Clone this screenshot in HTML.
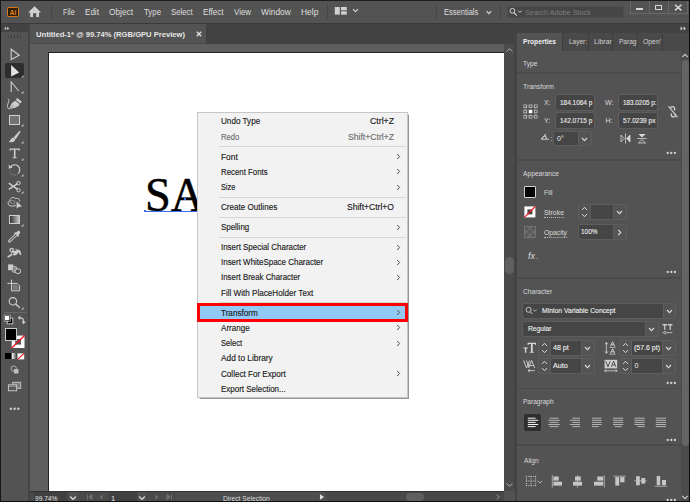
<!DOCTYPE html><html><head><meta charset="utf-8"><title>Illustrator</title><style>
html,body{margin:0;padding:0;background:#535353;}
#root{position:relative;width:690px;height:502px;overflow:hidden;background:#535353;font-family:"Liberation Sans",sans-serif;}
#root div,#root span.t,#root svg{position:absolute;}
span.t{white-space:pre;}
</style></head><body><div id="root"><div style="left:0px;top:0px;width:690px;height:502px;background:#535353;"></div><div style="left:0px;top:0px;width:1px;height:502px;background:#161616;"></div><div style="left:1px;top:23px;width:689px;height:1px;background:#3a3a3a;"></div><div style="left:1px;top:24px;width:689px;height:20px;background:#424242;"></div><div style="left:7.3px;top:6.9px;width:11.5px;height:10.6px;background:#33200c;border:1px solid #d9781c;box-sizing:border-box;border-radius:1.5px"></div><span class="t" id="t1" style="left:9.7px;top:8.00px;font-size:6.5px;line-height:9px;color:#e0841f;font-weight:bold;">Ai</span><svg style="left:0;top:0" width="60" height="24" viewBox="0 0 60 24"><path d="M34.6 6.3 L28.1 12.4 H30.2 V17 H33 V13.3 H36.3 V17 H39 V12.4 H41.1 Z" fill="#d0d0d0"/></svg><div style="left:51px;top:4px;width:1px;height:15px;background:#454545;"></div><span class="t" id="t2" style="left:62.6px;top:4.50px;font-size:9.8px;line-height:14px;color:#dedede;transform:scaleX(0.7407);transform-origin:0 50%;">File</span><span class="t" id="t3" style="left:85.4px;top:4.50px;font-size:9.8px;line-height:14px;color:#dedede;transform:scaleX(0.8229);transform-origin:0 50%;">Edit</span><span class="t" id="t4" style="left:109.3px;top:4.50px;font-size:9.8px;line-height:14px;color:#dedede;transform:scaleX(0.8472);transform-origin:0 50%;">Object</span><span class="t" id="t5" style="left:143.9px;top:4.50px;font-size:9.8px;line-height:14px;color:#dedede;transform:scaleX(0.8000);transform-origin:0 50%;">Type</span><span class="t" id="t6" style="left:171.3px;top:4.50px;font-size:9.8px;line-height:14px;color:#dedede;transform:scaleX(0.7968);transform-origin:0 50%;">Select</span><span class="t" id="t7" style="left:203.3px;top:4.50px;font-size:9.8px;line-height:14px;color:#dedede;transform:scaleX(0.8281);transform-origin:0 50%;">Effect</span><span class="t" id="t8" style="left:234.1px;top:4.50px;font-size:9.8px;line-height:14px;color:#dedede;transform:scaleX(0.8071);transform-origin:0 50%;">View</span><span class="t" id="t9" style="left:261.3px;top:4.50px;font-size:9.8px;line-height:14px;color:#dedede;transform:scaleX(0.8549);transform-origin:0 50%;">Window</span><span class="t" id="t10" style="left:301.1px;top:4.50px;font-size:9.8px;line-height:14px;color:#dedede;transform:scaleX(0.8633);transform-origin:0 50%;">Help</span><div style="left:326.5px;top:4px;width:1px;height:15px;background:#454545;"></div><svg style="left:0;top:0" width="400" height="24" viewBox="0 0 400 24"><rect x="334.8" y="7" width="5" height="7.6" fill="#d0d0d0"/><rect x="341" y="7" width="5.8" height="3.3" fill="#d0d0d0"/><rect x="341" y="11.3" width="5.8" height="3.3" fill="#d0d0d0"/><path d="M353 9.2 L355.5 11.7 L358 9.2" stroke="#d4d4d4" stroke-width="1.1" fill="none"/></svg><span class="t" id="t11" style="left:444.4px;top:5.00px;font-size:9.6px;line-height:13px;color:#dedede;transform:scaleX(0.7843);transform-origin:0 50%;">Essentials</span><div style="left:500px;top:4px;width:1px;height:15px;background:#454545;"></div><div style="left:435.5px;top:4px;width:1px;height:15px;background:#454545;"></div><div style="left:507.3px;top:5.6px;width:117.2px;height:12.8px;background:#464646;border:1px solid #4c4c4c;box-sizing:border-box;border-radius:2px"></div><svg style="left:0;top:0" width="690" height="24" viewBox="0 0 690 24"><circle cx="512.4" cy="10.8" r="2.4" stroke="#d4d4d4" stroke-width="1" fill="none"/><path d="M514.1 12.6 L516.8 15.7" stroke="#d4d4d4" stroke-width="1.1"/><path d="M518 10.6 L519.9 12.5 L521.8 10.6" stroke="#d4d4d4" stroke-width="1" fill="none"/><path d="M486.6 11.2 L488.9 13.6 L491.2 11.2" stroke="#d8d8d8" stroke-width="1.2" fill="none"/></svg><span class="t" id="t12" style="left:524.8px;top:7.00px;font-size:8px;line-height:11px;color:#7e7e7e;transform:scaleX(0.9076);transform-origin:0 50%;">Search Adobe Stock</span><div style="left:630px;top:0px;width:58px;height:13.5px;border:1px solid #686868;border-top:none;box-sizing:border-box;background:#525252"></div><div style="left:649px;top:0px;width:1px;height:13px;background:#686868;"></div><div style="left:668px;top:0px;width:1px;height:13px;background:#686868;"></div><div style="left:636px;top:8px;width:7px;height:2px;background:#d8d8d8;"></div><div style="left:655px;top:5.2px;width:7px;height:5px;border:1.3px solid #d8d8d8;box-sizing:border-box"></div><svg style="left:674px;top:3.5px" width="9" height="8" viewBox="0 0 9 8"><path d="M1 0.8 L7.4 6.4 M7.4 0.8 L1 6.4" stroke="#d8d8d8" stroke-width="1.5"/></svg><div style="left:30px;top:24px;width:176px;height:19.5px;background:#535353;"></div><span class="t" id="t13" style="left:36px;top:29.00px;font-size:8px;line-height:11px;color:#e6e6e6;font-weight:bold;transform:scaleX(0.9507);transform-origin:0 50%;">Untitled-1* @ 99.74% (RGB/GPU Preview)</span><svg style="left:196px;top:31px" width="6" height="6" viewBox="0 0 6 6"><path d="M0.8 0.8 L5.2 5.2 M5.2 0.8 L0.8 5.2" stroke="#e0e0e0" stroke-width="1.3"/></svg><div style="left:27.8px;top:24px;width:2.2px;height:478px;background:#454545;"></div><div style="left:30px;top:43px;width:176px;height:0.9px;background:#484848;"></div><div style="left:30px;top:44px;width:474px;height:447px;background:#5e5e5e;"></div><div style="left:48px;top:51.8px;width:455.5px;height:439px;background:#ffffff;border:1px solid #222;box-sizing:border-box;border-bottom:none;border-right:none"></div><span class="t" id="t14" style="left:144.95px;top:159.95px;font-size:49.5px;line-height:69px;color:#000;font-family:'Liberation Serif',serif;-webkit-text-stroke:0.5px #000;transform:scaleX(0.937);transform-origin:0 50%;">SAMPLE</span><div style="left:145px;top:210.5px;width:60px;height:1px;background:#3b6cf5;"></div><div style="left:143.8px;top:210px;width:2.4px;height:2.4px;background:#3b6cf5;"></div><div style="left:184px;top:197.5px;width:2.4px;height:2.4px;background:#3b6cf5;"></div><div style="left:503.5px;top:44px;width:11px;height:447px;background:#4b4b4b;"></div><div style="left:514.3px;top:23px;width:2.6px;height:479px;background:#434343;"></div><svg style="left:505px;top:47px" width="9" height="6" viewBox="0 0 9 6"><path d="M1.6 4.6 L4.5 1.7 L7.4 4.6" stroke="#b4b4b4" stroke-width="1" fill="none"/></svg><svg style="left:505px;top:482.3px" width="9" height="6" viewBox="0 0 9 6"><path d="M1.6 1.4 L4.5 4.3 L7.4 1.4" stroke="#b4b4b4" stroke-width="1" fill="none"/></svg><div style="left:504.7px;top:257px;width:9.6px;height:16.8px;border-radius:4.5px;background:#606060"></div><div style="left:30px;top:491px;width:473.5px;height:10px;background:#4a4a4a;"></div><div style="left:33.6px;top:491.6px;width:33.8px;height:9px;background:#404040;"></div><div style="left:68.6px;top:491.6px;width:8.8px;height:9px;background:#515151;"></div><div style="left:108.7px;top:491.6px;width:28.3px;height:9px;background:#404040;"></div><div style="left:137.8px;top:491.6px;width:8.4px;height:9px;background:#515151;"></div><div style="left:176px;top:491.6px;width:140.6px;height:9px;background:#4e4e4e;"></div><div style="left:317.6px;top:491.6px;width:8.4px;height:9px;background:#515151;"></div><div style="left:30px;top:490.6px;width:473.5px;height:1px;background:#333;"></div><span class="t" id="t15" style="left:34.6px;top:493.50px;font-size:7.5px;line-height:10px;color:#e0e0e0;transform:scaleX(0.8806);transform-origin:0 50%;">99.74%</span><svg style="left:69px;top:494.6px" width="8" height="6" viewBox="0 0 8 6"><path d="M1.2 1.5 L4 4.3 L6.8 1.5" stroke="#e0e0e0" stroke-width="1.2" fill="none"/></svg><svg style="left:86px;top:494.4px" width="8" height="6" viewBox="0 0 8 6"><path d="M1.5 0.5 V5.5 M6 0.5 L3 3 L6 5.5Z" stroke="#707070" stroke-width="1" fill="#707070"/></svg><svg style="left:98px;top:494.4px" width="6" height="6" viewBox="0 0 6 6"><path d="M4.5 0.5 L1.5 3 L4.5 5.5Z" fill="#707070"/></svg><span class="t" id="t16" style="left:111px;top:493.50px;font-size:7.5px;line-height:10px;color:#e0e0e0;">1</span><svg style="left:138px;top:494.6px" width="8" height="6" viewBox="0 0 8 6"><path d="M1.2 1.5 L4 4.3 L6.8 1.5" stroke="#e0e0e0" stroke-width="1.2" fill="none"/></svg><svg style="left:154px;top:494.4px" width="6" height="6" viewBox="0 0 6 6"><path d="M1.5 0.5 L4.5 3 L1.5 5.5Z" fill="#707070"/></svg><svg style="left:165px;top:494.4px" width="8" height="6" viewBox="0 0 8 6"><path d="M6.5 0.5 V5.5 M2 0.5 L5 3 L2 5.5Z" stroke="#707070" stroke-width="1" fill="#707070"/></svg><span class="t" id="t17" style="left:223px;top:493.50px;font-size:7.5px;line-height:10px;color:#d8d8d8;transform:scaleX(0.8909);transform-origin:0 50%;">Direct Selection</span><svg style="left:319px;top:494.3px" width="6" height="6" viewBox="0 0 6 6"><path d="M1 0.3 L5 3 L1 5.7Z" fill="#e0e0e0"/></svg><svg style="left:330.6px;top:493.6px" width="6" height="6" viewBox="0 0 6 6"><path d="M4.3 0.6 L1.7 3 L4.3 5.4" stroke="#c8c8c8" stroke-width="1" fill="none"/></svg><div style="left:327.5px;top:491.6px;width:176px;height:9px;background:#484848;"></div><div style="left:406px;top:492.5px;width:17.5px;height:8.5px;border-radius:4px;background:#5f5f5f"></div><svg style="left:495px;top:493.6px" width="6" height="6" viewBox="0 0 6 6"><path d="M1.7 0.6 L4.3 3 L1.7 5.4" stroke="#9a9a9a" stroke-width="1" fill="none"/></svg><div style="left:503.5px;top:491px;width:11px;height:10px;background:#535353;"></div><div style="left:1px;top:24px;width:27px;height:7.5px;background:#434343;"></div><svg style="left:4px;top:25.6px" width="7" height="5" viewBox="0 0 7 5"><path d="M0.8 0.7 L2.8 2.4 L0.8 4.1Z M3.2 0.7 L5.2 2.4 L3.2 4.1Z" fill="#d8d8d8"/></svg><div style="left:1px;top:31.5px;width:27px;height:470.5px;background:#535353;"></div><div style="left:7.5px;top:34.5px;width:1px;height:3px;background:#404040;"></div><div style="left:10.5px;top:34.5px;width:1px;height:3px;background:#404040;"></div><div style="left:13.5px;top:34.5px;width:1px;height:3px;background:#404040;"></div><div style="left:16.5px;top:34.5px;width:1px;height:3px;background:#404040;"></div><div style="left:19.5px;top:34.5px;width:1px;height:3px;background:#404040;"></div><svg style="left:9px;top:47px" width="13" height="15" viewBox="0 0 13 15"><path d="M2.2 2.2 V12.6 L10.2 8.2 Z" stroke="#cdcdcd" stroke-width="1.1" fill="none" stroke-linejoin="miter"/></svg><div style="left:5px;top:63.2px;width:19px;height:14.5px;background:#2d2d2d;border-radius:2px"></div><svg style="left:9px;top:63px" width="13" height="15" viewBox="0 0 13 15"><path d="M2.1 2 V13.6 L10.2 9.4 Z" fill="#e4e4e4"/></svg><svg style="left:21.4px;top:74.9px" width="3" height="3" viewBox="0 0 3 3"><path d="M2.5 0.1 V2.5 H0.1Z" fill="#c4c4c4"/></svg><svg style="left:9px;top:80px" width="13" height="14" viewBox="0 0 13 14"><path d="M2.2 12 V2 L9.8 11" stroke="#cdcdcd" stroke-width="1.1" fill="none"/></svg><svg style="left:21.4px;top:91.2px" width="3" height="3" viewBox="0 0 3 3"><path d="M2.5 0.1 V2.5 H0.1Z" fill="#c4c4c4"/></svg><svg style="left:0;top:0" width="690" height="502" viewBox="0 0 690 502"><path d="M17.1 97.9 L21.8 101.6 L20.3 103.4 L15.8 99.9 Z" fill="#cdcdcd"/><path d="M15.3 100.7 L19.5 104 C19.3 106.2 16.6 107.8 9.5 109 C10.2 105 12.2 101.8 15.3 100.7 Z" fill="#cdcdcd"/><path d="M9.8 108.7 L13.6 105.4" stroke="#535353" stroke-width="0.5"/><path d="M8 98.8 C10.2 101 7 104 7.4 106.4 C7.6 108 8.6 108.9 10 108.8" stroke="#cdcdcd" stroke-width="1" fill="none"/></svg><div style="left:9px;top:115.3px;width:11px;height:9.5px;background:#727272;border:1px solid #cfcfcf;box-sizing:border-box"></div><svg style="left:21.4px;top:124.2px" width="3" height="3" viewBox="0 0 3 3"><path d="M2.5 0.1 V2.5 H0.1Z" fill="#c4c4c4"/></svg><svg style="left:0;top:0" width="690" height="502" viewBox="0 0 690 502"><path d="M19.7 130.7 L20.7 131.5 L15.8 139.2 L13.5 137.6 Z" fill="#cdcdcd"/><path d="M13 137.5 L15.3 139.3 C15.2 141.6 12.6 142.7 8.7 142 C10.6 141 10.4 138.4 13 137.5Z" fill="#cdcdcd"/></svg><svg style="left:21.4px;top:140.7px" width="3" height="3" viewBox="0 0 3 3"><path d="M2.5 0.1 V2.5 H0.1Z" fill="#c4c4c4"/></svg><svg style="left:8px;top:147px" width="14" height="13" viewBox="0 0 14 13"><path d="M1.6 1.6 H11.8 V3.8 H11 C10.8 3 10.4 2.8 9.6 2.8 H7.5 V9.8 C7.5 10.4 7.9 10.6 8.9 10.6 V11.2 H4.5 V10.6 C5.5 10.6 5.9 10.4 5.9 9.8 V2.8 H3.8 C3 2.8 2.6 3 2.4 3.8 H1.6Z" fill="#cdcdcd"/></svg><svg style="left:21.4px;top:157.7px" width="3" height="3" viewBox="0 0 3 3"><path d="M2.5 0.1 V2.5 H0.1Z" fill="#c4c4c4"/></svg><svg style="left:0;top:0" width="690" height="502" viewBox="0 0 690 502"><path d="M10.6 167 A5 5 0 1 1 18.2 173.4" stroke="#cdcdcd" stroke-width="1.2" fill="none"/><path d="M18.2 173.4 A5 5 0 0 1 9.7 171.2" stroke="#8c8c8c" stroke-width="1" fill="none" stroke-dasharray="1.6 0.8"/><path d="M8.7 164.8 L8.9 168.7 L12.6 167.6Z" fill="#cdcdcd"/></svg><svg style="left:21.4px;top:174.2px" width="3" height="3" viewBox="0 0 3 3"><path d="M2.5 0.1 V2.5 H0.1Z" fill="#c4c4c4"/></svg><svg style="left:0;top:0" width="690" height="502" viewBox="0 0 690 502"><path d="M8.8 183.2 L17.6 189.4 M8.8 189.4 L17.6 183.6" stroke="#cdcdcd" stroke-width="1.5"/><circle cx="18.5" cy="183" r="1.7" stroke="#cdcdcd" stroke-width="1" fill="none"/><circle cx="18.5" cy="190.2" r="1.7" stroke="#cdcdcd" stroke-width="1" fill="none"/></svg><svg style="left:21.4px;top:190.7px" width="3" height="3" viewBox="0 0 3 3"><path d="M2.5 0.1 V2.5 H0.1Z" fill="#c4c4c4"/></svg><svg style="left:0;top:0" width="690" height="502" viewBox="0 0 690 502"><path d="M11.4 206 C7.6 206.2 7 201.6 10 200.8 C10 197.4 14.4 196.4 15.8 198.8 C17.8 197.6 20.2 199.2 19.6 201.6" stroke="#cdcdcd" stroke-width="1" fill="none"/><path d="M11.4 206 C13.4 206.4 14.8 205.8 16.2 205" stroke="#cdcdcd" stroke-width="1" fill="none"/><ellipse cx="12.6" cy="202" rx="2.6" ry="1.5" stroke="#999" stroke-width="0.8" fill="none"/><path d="M16.6 201.2 V208.8 L18.5 206.9 L22 206.4 Z" fill="#cdcdcd"/></svg><div style="left:9px;top:214.7px;width:11px;height:9.8px;background:linear-gradient(90deg,#303030,#c4c4c4);border:1px solid #cfcfcf;box-sizing:border-box"></div><svg style="left:21.4px;top:224.2px" width="3" height="3" viewBox="0 0 3 3"><path d="M2.5 0.1 V2.5 H0.1Z" fill="#c4c4c4"/></svg><svg style="left:0;top:0" width="690" height="502" viewBox="0 0 690 502"><path d="M19.2 230.8 C20.4 231.6 20.4 233 19.6 233.8 L18.2 235.2 L15.8 232.8 L17.2 231.4 C17.8 230.8 18.6 230.5 19.2 230.8Z" fill="#cdcdcd"/><path d="M14.6 232.6 L18.6 236.4" stroke="#cdcdcd" stroke-width="1.5"/><path d="M16.3 234.5 L9.6 241" stroke="#cdcdcd" stroke-width="3" stroke-linecap="round"/><path d="M16 234.8 L9.9 240.7" stroke="#535353" stroke-width="1.1" stroke-linecap="round"/></svg><svg style="left:0;top:0" width="690" height="502" viewBox="0 0 690 502"><path d="M8.3 256.7 L12.2 254.3" stroke="#cdcdcd" stroke-width="1.7" stroke-linecap="round"/><path d="M11 251.4 C12.6 250.4 14.6 251.6 16.2 250.2 C17.8 248.8 20.2 250 21 252.4 L21.2 254.9 L19.7 254.9 C19.8 253.2 19.2 252.5 18.2 252.5 C17.6 254.6 15.6 255.8 13.2 255.3 C11.4 254.9 10.5 253 11 251.4 Z" fill="#cdcdcd"/><path d="M10.3 251.2 C9.4 249.2 11.2 247.6 12.8 248.7 C13.6 249.4 13.4 250.4 12.8 251" stroke="#cdcdcd" stroke-width="1.3" fill="none" stroke-linecap="round"/><circle cx="12.6" cy="253.4" r="1" fill="#535353"/><circle cx="16" cy="249.2" r="0.6" fill="#cdcdcd"/></svg><svg style="left:0;top:0" width="690" height="502" viewBox="0 0 690 502"><rect x="8.1" y="264.4" width="5.2" height="5.8" fill="#cdcdcd"/><rect x="12.3" y="266.6" width="4.3" height="5.6" rx="1" fill="#8a8a8a" stroke="#cdcdcd" stroke-width="0.8"/><ellipse cx="17.9" cy="271.2" rx="2.8" ry="2.4" fill="#535353" stroke="#cdcdcd" stroke-width="1"/></svg><svg style="left:0;top:0" width="690" height="502" viewBox="0 0 690 502"><path d="M11.5 279.6 V290.8 H19.6 V285.8 L17.2 283.4 H7.4" stroke="#cdcdcd" stroke-width="1" fill="none"/><path d="M12.6 284.6 H16.6 L18.5 286.4 V289.7 H12.6Z" fill="#7c7c7c"/></svg><svg style="left:7px;top:295px" width="16" height="15" viewBox="0 0 16 15"><circle cx="5.9" cy="6.3" r="3.7" stroke="#cdcdcd" stroke-width="1.1" fill="none"/><path d="M8.6 9 L12.8 12.8" stroke="#cdcdcd" stroke-width="1.5"/></svg><svg style="left:21.4px;top:306.7px" width="3" height="3" viewBox="0 0 3 3"><path d="M2.5 0.1 V2.5 H0.1Z" fill="#c4c4c4"/></svg><div style="left:4px;top:312px;width:22px;height:1px;background:#686868;"></div><svg style="left:3px;top:314px" width="11" height="11" viewBox="0 0 11 11"><rect x="4.2" y="4.2" width="5.6" height="5.6" fill="#000" stroke="#cdcdcd" stroke-width="0.9"/><rect x="1.6" y="1.6" width="5.2" height="5.2" fill="#fff" stroke="#111" stroke-width="0.8"/><rect x="1.1" y="1.1" width="6.2" height="6.2" fill="none" stroke="#cdcdcd" stroke-width="0.6"/></svg><svg style="left:17px;top:315px" width="10" height="10" viewBox="0 0 10 10"><path d="M2.4 2.8 C5.4 2.6 6.8 4 6.6 7" stroke="#cdcdcd" stroke-width="1.2" fill="none"/><path d="M0.8 2.8 L3.2 0.6 V5Z" fill="#cdcdcd"/><path d="M6.6 9.2 L4.4 6.6 H8.8Z" fill="#cdcdcd"/></svg><svg style="left:11px;top:335px" width="14" height="14" viewBox="0 0 14 14"><rect x="0.7" y="0.6" width="12.8" height="12.4" fill="#fff"/><rect x="4.2" y="4" width="5.8" height="5.6" fill="#5a5a5a"/><path d="M0.7 13 L13.5 0.6" stroke="#f0141e" stroke-width="1.4"/></svg><div style="left:4.8px;top:328.4px;width:12.5px;height:12.6px;background:#000;border:1px solid #c8c8c8;box-sizing:border-box"></div><div style="left:5px;top:353.4px;width:6px;height:6px;background:#000;"></div><div style="left:11.5px;top:353.4px;width:5.3px;height:6px;background:linear-gradient(90deg,#fff,#333);"></div><svg style="left:17px;top:353px" width="8" height="7" viewBox="0 0 8 7"><rect x="0.5" y="0.4" width="6.7" height="6" fill="#fff"/><path d="M0.5 6.4 L7.2 0.4" stroke="#f0141e" stroke-width="1.2"/></svg><svg style="left:0;top:0" width="690" height="502" viewBox="0 0 690 502"><circle cx="13.7" cy="368.6" r="2.7" stroke="#b0b0b0" stroke-width="1" fill="none"/><rect x="13.9" y="368.9" width="4.6" height="4.6" rx="0.6" fill="#bdbdbd"/></svg><svg style="left:0;top:0" width="690" height="502" viewBox="0 0 690 502"><rect x="12.7" y="382.3" width="8" height="6" stroke="#cdcdcd" stroke-width="0.9" fill="#7a7a7a"/><rect x="8.4" y="384.8" width="8.3" height="6" stroke="#cdcdcd" stroke-width="0.9" fill="#5a5a5a"/><path d="M8.4 386.3 H16.7" stroke="#cdcdcd" stroke-width="0.6"/></svg><svg style="left:0;top:0" width="690" height="502" viewBox="0 0 690 502"><circle cx="10.9" cy="408.7" r="1.2" fill="#cfcfcf"/><circle cx="14.6" cy="408.7" r="1.2" fill="#cfcfcf"/><circle cx="18.3" cy="408.7" r="1.2" fill="#cfcfcf"/></svg><div style="left:517px;top:24px;width:173px;height:8.5px;background:#434343;"></div><svg style="left:679.5px;top:25.5px" width="7" height="5" viewBox="0 0 7 5"><path d="M0.6 0.5 L2.8 2.5 L0.6 4.5Z M3.6 0.5 L5.8 2.5 L3.6 4.5Z" fill="#d8d8d8"/></svg><div style="left:517px;top:32.5px;width:173px;height:18.5px;background:#494949;"></div><div style="left:517px;top:32.5px;width:45px;height:18.5px;background:#535353;"></div><div style="left:587.5px;top:32.5px;width:1px;height:18.5px;background:#3e3e3e;"></div><div style="left:612.3px;top:32.5px;width:1px;height:18.5px;background:#3e3e3e;"></div><div style="left:637px;top:32.5px;width:1px;height:18.5px;background:#3e3e3e;"></div><div style="left:662.3px;top:32.5px;width:1px;height:18.5px;background:#3e3e3e;"></div><div style="left:562px;top:32.5px;width:1px;height:18.5px;background:#3e3e3e;"></div><div style="left:517px;top:51px;width:173px;height:451px;background:#535353;"></div><span class="t" id="t18" style="left:523px;top:36.50px;font-size:7.5px;line-height:10px;color:#f0f0f0;font-weight:bold;transform:scaleX(0.8893);transform-origin:0 50%;">Properties</span><span class="t" id="t19" style="left:569px;top:36.50px;font-size:7.5px;line-height:10px;color:#d0d0d0;transform:scaleX(0.8629);transform-origin:0 50%;">Layer:</span><span class="t" id="t20" style="left:593.7px;top:36.50px;font-size:7.5px;line-height:10px;color:#d0d0d0;transform:scaleX(0.9329);transform-origin:0 50%;">Librar</span><span class="t" id="t21" style="left:618.5px;top:36.50px;font-size:7.5px;line-height:10px;color:#d0d0d0;transform:scaleX(0.8743);transform-origin:0 50%;">Parag</span><span class="t" id="t22" style="left:643px;top:36.50px;font-size:7.5px;line-height:10px;color:#d0d0d0;transform:scaleX(0.9100);transform-origin:0 50%;">Open'</span><div style="left:681.2px;top:51px;width:7.6px;height:451px;background:#4b4b4b;"></div><svg style="left:680.8px;top:53px" width="8" height="5" viewBox="0 0 8 5"><path d="M1.3 4 L4 1.3 L6.7 4" stroke="#c4c4c4" stroke-width="1.2" fill="none"/></svg><svg style="left:680.8px;top:494.5px" width="8" height="5" viewBox="0 0 8 5"><path d="M1.3 1 L4 3.7 L6.7 1" stroke="#c4c4c4" stroke-width="1.2" fill="none"/></svg><div style="left:681.8px;top:60px;width:7px;height:386px;border-radius:3.4px;background:#646464"></div><span class="t" id="t23" style="left:522.9px;top:58.50px;font-size:7.5px;line-height:10px;color:#dadada;transform:scaleX(0.8915);transform-origin:0 50%;">Type</span><div style="left:517px;top:72.1px;width:164.2px;height:1.9px;background:#4a4a4a;"></div><span class="t" id="t24" style="left:523px;top:81.50px;font-size:7.5px;line-height:10px;color:#dadada;transform:scaleX(0.9143);transform-origin:0 50%;">Transform</span><svg style="left:523px;top:104px" width="15" height="15" viewBox="0 0 15 15"><rect x="0.9" y="0.9" width="2.8" height="2.8" fill="none" stroke="#cfcfcf" stroke-width="0.7"/><rect x="6.1000000000000005" y="0.9" width="2.8" height="2.8" fill="none" stroke="#cfcfcf" stroke-width="0.7"/><rect x="11.3" y="0.9" width="2.8" height="2.8" fill="none" stroke="#cfcfcf" stroke-width="0.7"/><rect x="0.9" y="6.1000000000000005" width="2.8" height="2.8" fill="none" stroke="#cfcfcf" stroke-width="0.7"/><rect x="5.8" y="5.8" width="3.4" height="3.4" fill="#fff"/><rect x="11.3" y="6.1000000000000005" width="2.8" height="2.8" fill="none" stroke="#cfcfcf" stroke-width="0.7"/><rect x="0.9" y="11.3" width="2.8" height="2.8" fill="none" stroke="#cfcfcf" stroke-width="0.7"/><rect x="6.1000000000000005" y="11.3" width="2.8" height="2.8" fill="none" stroke="#cfcfcf" stroke-width="0.7"/><rect x="11.3" y="11.3" width="2.8" height="2.8" fill="none" stroke="#cfcfcf" stroke-width="0.7"/><path d="M4 2.3 H6 M9.2 2.3 H11.2 M4 12.7 H6 M9.2 12.7 H11.2 M2.3 4 V6 M2.3 9.2 V11.2 M12.7 4 V6 M12.7 9.2 V11.2" stroke="#9a9a9a" stroke-width="0.6"/></svg><span class="t" id="t25" style="left:544px;top:97.50px;font-size:7px;line-height:10px;color:#dadada;">X:</span><span class="t" id="t26" style="left:544px;top:115.50px;font-size:7px;line-height:10px;color:#dadada;">Y:</span><span class="t" id="t27" style="left:605px;top:97.50px;font-size:7px;line-height:10px;color:#dadada;">W:</span><span class="t" id="t28" style="left:605.5px;top:115.50px;font-size:7px;line-height:10px;color:#dadada;">H:</span><div style="left:555.8px;top:95.4px;width:38.6px;height:14.6px;background:#454545;box-shadow:0 0 0 0.8px #616161;border-radius:1.8px;"></div><div style="left:555.8px;top:113.4px;width:38.6px;height:14.2px;background:#454545;box-shadow:0 0 0 0.8px #616161;border-radius:1.8px;"></div><div style="left:619.1px;top:95.4px;width:38.2px;height:14.6px;background:#454545;box-shadow:0 0 0 0.8px #616161;border-radius:1.8px;"></div><div style="left:619.1px;top:113.4px;width:38.2px;height:14.2px;background:#454545;box-shadow:0 0 0 0.8px #616161;border-radius:1.8px;"></div><span class="t" id="t29" style="left:559.7px;top:97.50px;font-size:7px;line-height:10px;color:#f0f0f0;transform:scaleX(0.9216);transform-origin:0 50%;-webkit-text-stroke:0.1px #f0f0f0;">184.1064 p</span><span class="t" id="t30" style="left:559.7px;top:115.50px;font-size:7px;line-height:10px;color:#f0f0f0;transform:scaleX(0.9216);transform-origin:0 50%;-webkit-text-stroke:0.1px #f0f0f0;">142.0715 p</span><span class="t" id="t31" style="left:622.5px;top:97.50px;font-size:7px;line-height:10px;color:#f0f0f0;transform:scaleX(0.9058);transform-origin:0 50%;-webkit-text-stroke:0.1px #f0f0f0;">183.0205 p:</span><span class="t" id="t32" style="left:622.5px;top:115.50px;font-size:7px;line-height:10px;color:#f0f0f0;transform:scaleX(0.9378);transform-origin:0 50%;-webkit-text-stroke:0.1px #f0f0f0;">57.0239 px</span><svg style="left:666px;top:104px" width="14" height="16" viewBox="0 0 14 16"><path d="M4.6 4.6 C4.6 2 8.6 2 8.6 4.6 V6.4 M9.4 9.4 V11 C9.4 13.6 5.4 13.6 5.4 11 V9.6" stroke="#cfcfcf" stroke-width="1.3" fill="none"/><path d="M2.4 2.2 L11.6 13.4" stroke="#cfcfcf" stroke-width="1.1"/></svg><svg style="left:540px;top:132px" width="11" height="9" viewBox="0 0 11 9"><path d="M1.2 7.2 H8.8 M1.2 7.2 L6 2.2 M6.4 7.2 A3 3 0 0 0 4.8 4" stroke="#cfcfcf" stroke-width="1.1" fill="none"/></svg><span class="t" id="t33" style="left:550.3px;top:133.50px;font-size:7px;line-height:10px;color:#dadada;">:</span><div style="left:553.5px;top:131.8px;width:37.7px;height:13.6px;background:#545454;box-shadow:0 0 0 0.8px #616161;border-radius:1.8px;"></div><div style="left:553.5px;top:131.8px;width:25.00px;height:13.6px;background:#454545;border-radius:1.8px 0 0 1.8px;"></div><div style="left:578.2px;top:131.8px;width:0.8px;height:13.6px;background:#5e5e5e;"></div><span class="t" id="t34" style="left:557px;top:133.50px;font-size:7px;line-height:10px;color:#f0f0f0;">0°</span><svg style="left:581.2px;top:136.5px" width="7" height="5" viewBox="0 0 7 5"><path d="M1 1 L3.5 3.6 L6 1" stroke="#dcdcdc" stroke-width="1.1" fill="none"/></svg><svg style="left:620px;top:133px" width="11" height="11" viewBox="0 0 11 11"><path d="M1 2 L4.2 5.5 L1 9Z M10 2 L6.8 5.5 L10 9Z" fill="none" stroke="#d8d8d8" stroke-width="0.8"/><path d="M10 2 L6.8 5.5 L10 9Z" fill="#d8d8d8"/><path d="M5.5 0.5 V10.5" stroke="#d8d8d8" stroke-width="0.8"/></svg><svg style="left:637px;top:133px" width="10" height="11" viewBox="0 0 10 11"><path d="M1.4 1 L5 4.4 L8.6 1Z" fill="#d8d8d8"/><path d="M1.4 10 L5 6.6 L8.6 10Z" fill="none" stroke="#d8d8d8" stroke-width="0.8"/><path d="M0.4 5.5 H9.6" stroke="#d8d8d8" stroke-width="0.8"/></svg><svg style="left:665px;top:150.4px" width="13" height="6" viewBox="0 0 13 6"><circle cx="2.7" cy="3" r="1.15" fill="#d4d4d4"/><circle cx="6.3" cy="3" r="1.15" fill="#d4d4d4"/><circle cx="9.9" cy="3" r="1.15" fill="#d4d4d4"/></svg><div style="left:517px;top:159.1px;width:164.2px;height:1.9px;background:#4a4a4a;"></div><span class="t" id="t35" style="left:523px;top:168.50px;font-size:7.5px;line-height:10px;color:#dadada;transform:scaleX(0.8899);transform-origin:0 50%;">Appearance</span><div style="left:524px;top:186px;width:11.5px;height:11.7px;background:#000;border:1px solid #d4d4d4;box-sizing:border-box;border-radius:1px"></div><span class="t" id="t36" style="left:544px;top:187.50px;font-size:7px;line-height:10px;color:#dadada;transform:scaleX(0.9494);transform-origin:0 50%;">Fill</span><svg style="left:524px;top:206px" width="12" height="12" viewBox="0 0 12 12"><rect x="0.4" y="0.4" width="11" height="11" fill="#fff"/><rect x="3.4" y="3.4" width="5" height="5" fill="#444"/><path d="M0.4 11.4 L11.4 0.4" stroke="#f0141e" stroke-width="1.3"/></svg><span class="t" id="t37" style="left:544px;top:207.50px;font-size:7px;line-height:10px;color:#dadada;transform:scaleX(0.9884);transform-origin:0 50%;border-bottom:1px dotted #bbb;height:9.5px;">Stroke</span><div style="left:578.5px;top:205px;width:47px;height:14px;background:#545454;box-shadow:0 0 0 0.8px #616161;border-radius:1.8px;"></div><div style="left:590.8px;top:205px;width:22.20px;height:14px;background:#454545;border-radius:0 0 0 0;"></div><div style="left:590.3px;top:205px;width:0.8px;height:14px;background:#5e5e5e;"></div><div style="left:612.7px;top:205px;width:0.8px;height:14px;background:#5e5e5e;"></div><svg style="left:581.0px;top:206px" width="7" height="12" viewBox="0 0 7 12"><path d="M1 3.9 L3.5 1.3 L6 3.9 M1 8.1 L3.5 10.7 L6 8.1" stroke="#dcdcdc" stroke-width="1" fill="none"/></svg><svg style="left:615.8px;top:209.5px" width="7" height="5" viewBox="0 0 7 5"><path d="M1 1 L3.5 3.6 L6 1" stroke="#dcdcdc" stroke-width="1.1" fill="none"/></svg><svg style="left:524px;top:226px" width="12" height="12" viewBox="0 0 12 12"><rect x="0.4" y="0.4" width="11" height="11" fill="#6a6a6a" stroke="#8a8a8a" stroke-width="0.6"/><path d="M0.7 0.7 H4.2 V4.2 H0.7Z M7.6 0.7 H11.1 V4.2 H7.6Z M4.2 4.2 H7.6 V7.6 H4.2Z M0.7 7.6 H4.2 V11.1 H0.7Z M7.6 7.6 H11.1 V11.1 H7.6Z" fill="#5a5a5a"/></svg><span class="t" id="t38" style="left:544px;top:227.50px;font-size:7px;line-height:10px;color:#dadada;transform:scaleX(0.9691);transform-origin:0 50%;border-bottom:1px dotted #bbb;height:9.5px;">Opacity</span><div style="left:578.5px;top:225px;width:47px;height:13.5px;background:#545454;box-shadow:0 0 0 0.8px #616161;border-radius:1.8px;"></div><div style="left:578.5px;top:225px;width:34.50px;height:13.5px;background:#454545;border-radius:1.8px 0 0 1.8px;"></div><div style="left:612.7px;top:225px;width:0.8px;height:13.5px;background:#5e5e5e;"></div><span class="t" id="t39" style="left:580.8px;top:226.50px;font-size:7px;line-height:10px;color:#f0f0f0;transform:scaleX(0.9215);transform-origin:0 50%;-webkit-text-stroke:0.1px #f0f0f0;">100%</span><svg style="left:616.5px;top:228.5px" width="5" height="7" viewBox="0 0 5 7"><path d="M1.2 0.8 L3.8 3.5 L1.2 6.2" stroke="#dcdcdc" stroke-width="1.1" fill="none"/></svg><span class="t" id="t40" style="left:528px;top:249.50px;font-size:9px;line-height:13px;color:#dcdcdc;font-style:italic;">fx</span><span class="t" id="t41" style="left:536px;top:251.00px;font-size:8px;line-height:11px;color:#dcdcdc;">.</span><svg style="left:665px;top:269.4px" width="13" height="6" viewBox="0 0 13 6"><circle cx="2.7" cy="3" r="1.15" fill="#d4d4d4"/><circle cx="6.3" cy="3" r="1.15" fill="#d4d4d4"/><circle cx="9.9" cy="3" r="1.15" fill="#d4d4d4"/></svg><div style="left:517px;top:277.1px;width:164.2px;height:1.9px;background:#4a4a4a;"></div><span class="t" id="t42" style="left:523.4px;top:286.50px;font-size:7.5px;line-height:10px;color:#dadada;transform:scaleX(0.8835);transform-origin:0 50%;">Character</span><div style="left:523.4px;top:304px;width:152px;height:13.5px;background:#545454;box-shadow:0 0 0 0.8px #616161;border-radius:1.8px;"></div><div style="left:523.4px;top:304px;width:139.40px;height:13.5px;background:#454545;border-radius:1.8px 0 0 1.8px;"></div><div style="left:662.5px;top:304px;width:0.8px;height:13.5px;background:#5e5e5e;"></div><svg style="left:665.5px;top:308.5px" width="7" height="5" viewBox="0 0 7 5"><path d="M1 1 L3.5 3.6 L6 1" stroke="#dcdcdc" stroke-width="1.1" fill="none"/></svg><svg style="left:525px;top:306px" width="14" height="10" viewBox="0 0 14 10"><circle cx="3.6" cy="3.8" r="2.5" stroke="#cfcfcf" stroke-width="0.9" fill="none"/><path d="M5.4 5.8 L7.4 8" stroke="#cfcfcf" stroke-width="1"/><path d="M8.2 3.6 L10 5.4 L11.8 3.6" stroke="#cfcfcf" stroke-width="0.8" fill="none"/></svg><span class="t" id="t43" style="left:542px;top:305.50px;font-size:7px;line-height:10px;color:#f4f4f4;transform:scaleX(0.9703);transform-origin:0 50%;-webkit-text-stroke:0.1px #f0f0f0;">Minion Variable Concept</span><div style="left:523.4px;top:322px;width:134.5px;height:13.5px;background:#545454;box-shadow:0 0 0 0.8px #616161;border-radius:1.8px;"></div><div style="left:523.4px;top:322px;width:121.40px;height:13.5px;background:#454545;border-radius:1.8px 0 0 1.8px;"></div><div style="left:644.5px;top:322px;width:0.8px;height:13.5px;background:#5e5e5e;"></div><svg style="left:647.5px;top:326.7px" width="7" height="5" viewBox="0 0 7 5"><path d="M1 1 L3.5 3.6 L6 1" stroke="#dcdcdc" stroke-width="1.1" fill="none"/></svg><span class="t" id="t44" style="left:528px;top:323.50px;font-size:7px;line-height:10px;color:#f4f4f4;transform:scaleX(0.9586);transform-origin:0 50%;-webkit-text-stroke:0.1px #f0f0f0;">Regular</span><svg style="left:662px;top:323px" width="11" height="12" viewBox="0 0 11 12"><path d="M0.6 1 H5 V2.4 H3.4 V7 H2.2 V2.4 H0.6Z M5.8 1 H10.4 V2.4 H8.8 V7 H7.6 V2.4 H5.8Z" fill="#cfcfcf"/><path d="M0.6 9.6 H10.4" stroke="#cfcfcf" stroke-width="0.8"/><circle cx="3" cy="9.6" r="1.2" fill="#535353" stroke="#cfcfcf" stroke-width="0.7"/></svg><svg style="left:523px;top:342px" width="14" height="12" viewBox="0 0 14 12"><path d="M0.4 5.4 H4.8 V6.6 H3.3 V10.8 H1.9 V6.6 H0.4Z" fill="#d8d8d8"/><path d="M4.6 0.8 H13 V3 H12.2 C12.1 2.2 11.8 2 11 2 H9.7 V9.6 C9.7 10.1 10 10.2 10.8 10.2 V10.8 H6.8 V10.2 C7.6 10.2 7.9 10.1 7.9 9.6 V2 H6.6 C5.8 2 5.5 2.2 5.4 3 H4.6Z" fill="#d8d8d8"/></svg><div style="left:539px;top:341px;width:54.6px;height:13.5px;background:#545454;box-shadow:0 0 0 0.8px #616161;border-radius:1.8px;"></div><div style="left:550.6px;top:341px;width:31.00px;height:13.5px;background:#454545;border-radius:0 0 0 0;"></div><div style="left:550.1px;top:341px;width:0.8px;height:13.5px;background:#5e5e5e;"></div><div style="left:581.3000000000001px;top:341px;width:0.8px;height:13.5px;background:#5e5e5e;"></div><svg style="left:541.0px;top:341.8px" width="7" height="12" viewBox="0 0 7 12"><path d="M1 3.9 L3.5 1.3 L6 3.9 M1 8.1 L3.5 10.7 L6 8.1" stroke="#dcdcdc" stroke-width="1" fill="none"/></svg><svg style="left:584.0px;top:345.5px" width="7" height="5" viewBox="0 0 7 5"><path d="M1 1 L3.5 3.6 L6 1" stroke="#dcdcdc" stroke-width="1.1" fill="none"/></svg><span class="t" id="t45" style="left:553px;top:342.50px;font-size:7px;line-height:10px;color:#f4f4f4;transform:scaleX(1.0142);transform-origin:0 50%;-webkit-text-stroke:0.1px #f0f0f0;">48 pt</span><svg style="left:604px;top:341px" width="14" height="14" viewBox="0 0 14 14"><path d="M6.4 5.4 L8.6 0.8 L10.8 5.4 M7.2 3.8 H10" stroke="#d8d8d8" stroke-width="0.9" fill="none"/><path d="M6.4 12.4 L8.6 7.8 L10.8 12.4 M7.2 10.8 H10" stroke="#d8d8d8" stroke-width="0.9" fill="none"/><path d="M5.6 6.4 H11.6 M5.6 13.2 H11.6" stroke="#d8d8d8" stroke-width="0.7"/><path d="M2.4 1.6 V12 M0.8 3.4 L2.4 1.4 L4 3.4 M0.8 10.4 L2.4 12.4 L4 10.4" stroke="#d8d8d8" stroke-width="0.8" fill="none"/></svg><div style="left:620px;top:341px;width:54.8px;height:13.5px;background:#545454;box-shadow:0 0 0 0.8px #616161;border-radius:1.8px;"></div><div style="left:631.4px;top:341px;width:31.20px;height:13.5px;background:#454545;border-radius:0 0 0 0;"></div><div style="left:630.9px;top:341px;width:0.8px;height:13.5px;background:#5e5e5e;"></div><div style="left:662.3000000000001px;top:341px;width:0.8px;height:13.5px;background:#5e5e5e;"></div><svg style="left:622.0px;top:341.8px" width="7" height="12" viewBox="0 0 7 12"><path d="M1 3.9 L3.5 1.3 L6 3.9 M1 8.1 L3.5 10.7 L6 8.1" stroke="#dcdcdc" stroke-width="1" fill="none"/></svg><svg style="left:665.2px;top:345.5px" width="7" height="5" viewBox="0 0 7 5"><path d="M1 1 L3.5 3.6 L6 1" stroke="#dcdcdc" stroke-width="1.1" fill="none"/></svg><span class="t" id="t46" style="left:634px;top:342.50px;font-size:7px;line-height:10px;color:#f4f4f4;transform:scaleX(0.9970);transform-origin:0 50%;-webkit-text-stroke:0.1px #f0f0f0;">(57.6 pt)</span><svg style="left:523px;top:359px" width="15" height="14" viewBox="0 0 15 14"><path d="M0.6 1.4 L3.6 9 L6.6 1.4 M3.4 1.4 L6.2 8" stroke="#d8d8d8" stroke-width="0.9" fill="none"/><path d="M5.6 9 L8.6 1.4 L11.8 9 M6.8 6.6 H10.6" stroke="#d8d8d8" stroke-width="0.9" fill="none"/><path d="M5 11.6 H11.8 M5 11.6 L6.8 10.2 M5 11.6 L6.8 13" stroke="#d8d8d8" stroke-width="0.8" fill="none"/></svg><div style="left:539px;top:359px;width:54.6px;height:13.5px;background:#545454;box-shadow:0 0 0 0.8px #616161;border-radius:1.8px;"></div><div style="left:550.6px;top:359px;width:31.00px;height:13.5px;background:#454545;border-radius:0 0 0 0;"></div><div style="left:550.1px;top:359px;width:0.8px;height:13.5px;background:#5e5e5e;"></div><div style="left:581.3000000000001px;top:359px;width:0.8px;height:13.5px;background:#5e5e5e;"></div><svg style="left:541.0px;top:359.8px" width="7" height="12" viewBox="0 0 7 12"><path d="M1 3.9 L3.5 1.3 L6 3.9 M1 8.1 L3.5 10.7 L6 8.1" stroke="#dcdcdc" stroke-width="1" fill="none"/></svg><svg style="left:584.0px;top:363.5px" width="7" height="5" viewBox="0 0 7 5"><path d="M1 1 L3.5 3.6 L6 1" stroke="#dcdcdc" stroke-width="1.1" fill="none"/></svg><span class="t" id="t47" style="left:553.4px;top:360.50px;font-size:7px;line-height:10px;color:#f4f4f4;transform:scaleX(1.0273);transform-origin:0 50%;-webkit-text-stroke:0.1px #f0f0f0;">Auto</span><svg style="left:604px;top:359px" width="14" height="14" viewBox="0 0 14 14"><rect x="0.6" y="0.8" width="12.6" height="8.6" fill="#d0d0d0"/><path d="M1.8 2.2 L4 7.8 L6.2 2.2 M7.4 7.8 L9.6 2.2 L11.8 7.8 M8.2 6 H11" stroke="#444" stroke-width="0.9" fill="none"/><path d="M0.6 11.8 H13.2 M0.6 11.8 L2.2 10.6 M0.6 11.8 L2.2 13 M13.2 11.8 L11.6 10.6 M13.2 11.8 L11.6 13" stroke="#d8d8d8" stroke-width="0.8" fill="none"/></svg><div style="left:620px;top:359px;width:54.8px;height:13.5px;background:#545454;box-shadow:0 0 0 0.8px #616161;border-radius:1.8px;"></div><div style="left:631.4px;top:359px;width:31.20px;height:13.5px;background:#454545;border-radius:0 0 0 0;"></div><div style="left:630.9px;top:359px;width:0.8px;height:13.5px;background:#5e5e5e;"></div><div style="left:662.3000000000001px;top:359px;width:0.8px;height:13.5px;background:#5e5e5e;"></div><svg style="left:622.0px;top:359.8px" width="7" height="12" viewBox="0 0 7 12"><path d="M1 3.9 L3.5 1.3 L6 3.9 M1 8.1 L3.5 10.7 L6 8.1" stroke="#dcdcdc" stroke-width="1" fill="none"/></svg><svg style="left:665.2px;top:363.5px" width="7" height="5" viewBox="0 0 7 5"><path d="M1 1 L3.5 3.6 L6 1" stroke="#dcdcdc" stroke-width="1.1" fill="none"/></svg><span class="t" id="t48" style="left:634.5px;top:360.50px;font-size:7px;line-height:10px;color:#f4f4f4;">0</span><svg style="left:665px;top:380.09999999999997px" width="13" height="6" viewBox="0 0 13 6"><circle cx="2.7" cy="3" r="1.15" fill="#d4d4d4"/><circle cx="6.3" cy="3" r="1.15" fill="#d4d4d4"/><circle cx="9.9" cy="3" r="1.15" fill="#d4d4d4"/></svg><div style="left:517px;top:387.6px;width:164.2px;height:1.9px;background:#4a4a4a;"></div><span class="t" id="t49" style="left:523.4px;top:396.50px;font-size:7.5px;line-height:10px;color:#dadada;transform:scaleX(0.8735);transform-origin:0 50%;">Paragraph</span><div style="left:524px;top:414.4px;width:17.2px;height:16.6px;background:#2f2f2f;border-radius:2px"></div><svg style="left:0;top:0" width="690" height="502" viewBox="0 0 690 502"><rect x="527.80" y="417.70" width="7.80" height="1" fill="#f2f2f2"/><rect x="527.80" y="419.80" width="10.40" height="1" fill="#f2f2f2"/><rect x="527.80" y="421.90" width="7.80" height="1" fill="#f2f2f2"/><rect x="527.80" y="424.00" width="10.40" height="1" fill="#f2f2f2"/><rect x="527.80" y="426.10" width="7.80" height="1" fill="#f2f2f2"/><rect x="549.65" y="417.70" width="8.70" height="1" fill="#b4b4b4"/><rect x="548.20" y="419.80" width="11.60" height="1" fill="#b4b4b4"/><rect x="549.65" y="421.90" width="8.70" height="1" fill="#b4b4b4"/><rect x="548.20" y="424.00" width="11.60" height="1" fill="#b4b4b4"/><rect x="549.65" y="426.10" width="8.70" height="1" fill="#b4b4b4"/><rect x="572.42" y="417.70" width="7.58" height="1" fill="#b4b4b4"/><rect x="569.90" y="419.80" width="10.10" height="1" fill="#b4b4b4"/><rect x="572.42" y="421.90" width="7.58" height="1" fill="#b4b4b4"/><rect x="569.90" y="424.00" width="10.10" height="1" fill="#b4b4b4"/><rect x="572.42" y="426.10" width="7.58" height="1" fill="#b4b4b4"/><rect x="592.00" y="417.70" width="9.60" height="1" fill="#b4b4b4"/><rect x="592.00" y="419.80" width="9.60" height="1" fill="#b4b4b4"/><rect x="592.00" y="421.90" width="9.60" height="1" fill="#b4b4b4"/><rect x="592.00" y="424.00" width="9.60" height="1" fill="#b4b4b4"/><rect x="592.00" y="426.10" width="6.72" height="1" fill="#b4b4b4"/><rect x="613.00" y="417.70" width="10.20" height="1" fill="#b4b4b4"/><rect x="613.00" y="419.80" width="10.20" height="1" fill="#b4b4b4"/><rect x="613.00" y="421.90" width="10.20" height="1" fill="#b4b4b4"/><rect x="613.00" y="424.00" width="10.20" height="1" fill="#b4b4b4"/><rect x="614.53" y="426.10" width="7.14" height="1" fill="#b4b4b4"/><rect x="634.50" y="417.70" width="10.20" height="1" fill="#b4b4b4"/><rect x="634.50" y="419.80" width="10.20" height="1" fill="#b4b4b4"/><rect x="634.50" y="421.90" width="10.20" height="1" fill="#b4b4b4"/><rect x="634.50" y="424.00" width="10.20" height="1" fill="#b4b4b4"/><rect x="637.56" y="426.10" width="7.14" height="1" fill="#b4b4b4"/><rect x="655.80" y="417.70" width="10.20" height="1" fill="#b4b4b4"/><rect x="655.80" y="419.80" width="10.20" height="1" fill="#b4b4b4"/><rect x="655.80" y="421.90" width="10.20" height="1" fill="#b4b4b4"/><rect x="655.80" y="424.00" width="10.20" height="1" fill="#b4b4b4"/><rect x="655.80" y="426.10" width="10.20" height="1" fill="#b4b4b4"/></svg><svg style="left:665px;top:437.4px" width="13" height="6" viewBox="0 0 13 6"><circle cx="2.7" cy="3" r="1.15" fill="#d4d4d4"/><circle cx="6.3" cy="3" r="1.15" fill="#d4d4d4"/><circle cx="9.9" cy="3" r="1.15" fill="#d4d4d4"/></svg><div style="left:517px;top:443.90000000000003px;width:164.2px;height:1.9px;background:#4a4a4a;"></div><span class="t" id="t50" style="left:523.6px;top:455.50px;font-size:7.5px;line-height:10px;color:#dadada;transform:scaleX(0.8809);transform-origin:0 50%;">Align</span><svg style="left:0;top:0" width="690" height="502" viewBox="0 0 690 502"><path d="M526.5 475.8 V486.2" stroke="#c6c6c6" stroke-width="0.9" stroke-dasharray="1.3 1.1"/><path d="M531 475.8 V486.2" stroke="#c6c6c6" stroke-width="0.9" stroke-dasharray="1.3 1.1"/><path d="M535.6 475.8 V486.2" stroke="#c6c6c6" stroke-width="0.9" stroke-dasharray="1.3 1.1"/><path d="M525.8 476.5 H536.2" stroke="#c6c6c6" stroke-width="0.9" stroke-dasharray="1.3 1.1"/><path d="M525.8 481 H536.2" stroke="#c6c6c6" stroke-width="0.9" stroke-dasharray="1.3 1.1"/><path d="M525.8 485.6 H536.2" stroke="#c6c6c6" stroke-width="0.9" stroke-dasharray="1.3 1.1"/><path d="M537.8 480.9 L539.9 483 L542 480.9" stroke="#c6c6c6" stroke-width="0.9" fill="none"/><rect x="551.8" y="475.2" width="1.00" height="12.40" fill="#a8a8a8"/><rect x="553.4" y="476.5" width="5.30" height="4.10" fill="#c6c6c6"/><rect x="553.4" y="481.7" width="8.60" height="3.90" fill="#c6c6c6"/><rect x="577.1" y="475.2" width="1.00" height="12.40" fill="#a8a8a8"/><rect x="575" y="476.5" width="5.80" height="4.10" fill="#c6c6c6"/><rect x="573" y="481.7" width="9.00" height="3.90" fill="#c6c6c6"/><rect x="603.8" y="475.2" width="1.00" height="12.40" fill="#a8a8a8"/><rect x="597.3" y="476.5" width="5.90" height="4.10" fill="#c6c6c6"/><rect x="594" y="481.7" width="9.20" height="3.90" fill="#c6c6c6"/><rect x="613.4" y="475.7" width="12.40" height="1.00" fill="#a8a8a8"/><rect x="615.3" y="477.1" width="3.90" height="8.50" fill="#c6c6c6"/><rect x="620.2" y="477.1" width="4.30" height="5.20" fill="#c6c6c6"/><rect x="634.2" y="480.3" width="12.50" height="1.00" fill="#a8a8a8"/><rect x="636.1" y="476.2" width="3.70" height="9.10" fill="#c6c6c6"/><rect x="641.3" y="478" width="3.90" height="5.60" fill="#c6c6c6"/><rect x="654.8" y="485.8" width="12.30" height="1.00" fill="#a8a8a8"/><rect x="656.7" y="476" width="3.50" height="9.20" fill="#c6c6c6"/><rect x="662" y="480" width="4.00" height="5.20" fill="#c6c6c6"/></svg><svg style="left:665px;top:496.9px" width="13" height="6" viewBox="0 0 13 6"><circle cx="2.7" cy="3" r="1.15" fill="#d4d4d4"/><circle cx="6.3" cy="3" r="1.15" fill="#d4d4d4"/><circle cx="9.9" cy="3" r="1.15" fill="#d4d4d4"/></svg><div style="left:197.4px;top:112px;width:210.4px;height:285.8px;background:#f2f2f2;border:1px solid #c6c6c6;box-sizing:border-box;box-shadow:1.4px 1.4px 0.8px rgba(0,0,0,0.42)"></div><div style="left:196.8px;top:302.8px;width:210.9px;height:19.5px;background:#91c9f7;border:3.1px solid #fd0006;box-sizing:border-box"></div><div style="left:218.5px;top:146.0px;width:187px;height:1px;background:#d7d7d7;"></div><div style="left:218.5px;top:196.5px;width:187px;height:1px;background:#d7d7d7;"></div><div style="left:218.5px;top:216.5px;width:187px;height:1px;background:#d7d7d7;"></div><div style="left:218.5px;top:236.5px;width:187px;height:1px;background:#d7d7d7;"></div><div style="left:218.5px;top:301.5px;width:187px;height:1px;background:#d7d7d7;"></div><span class="t" id="t51" style="left:221.3px;top:114.00px;font-size:9.6px;line-height:13px;color:#1a1a1a;transform:scaleX(0.8479);transform-origin:0 50%;-webkit-text-stroke:0.15px #1a1a1a;">Undo Type</span><span class="t" id="t52" style="left:370px;top:114.00px;font-size:9.6px;line-height:13px;color:#1a1a1a;transform:scaleX(0.9094);transform-origin:0 50%;-webkit-text-stroke:0.15px #1a1a1a;">Ctrl+Z</span><span class="t" id="t53" style="left:221.3px;top:130.00px;font-size:9.6px;line-height:13px;color:#6d6d6d;transform:scaleX(0.7935);transform-origin:0 50%;-webkit-text-stroke:0.15px #6d6d6d;">Redo</span><span class="t" id="t54" style="left:348px;top:130.00px;font-size:9.6px;line-height:13px;color:#6d6d6d;transform:scaleX(0.8987);transform-origin:0 50%;-webkit-text-stroke:0.15px #6d6d6d;">Shift+Ctrl+Z</span><span class="t" id="t55" style="left:221.3px;top:150.00px;font-size:9.6px;line-height:13px;color:#1a1a1a;transform:scaleX(0.8697);transform-origin:0 50%;-webkit-text-stroke:0.15px #1a1a1a;">Font</span><svg style="left:396px;top:153.0px" width="5" height="7" viewBox="0 0 5 7"><path d="M1.2 1 L3.6 3.5 L1.2 6" stroke="#4a4a4a" stroke-width="1" fill="none"/></svg><span class="t" id="t56" style="left:221.3px;top:165.00px;font-size:9.6px;line-height:13px;color:#1a1a1a;transform:scaleX(0.8184);transform-origin:0 50%;-webkit-text-stroke:0.15px #1a1a1a;">Recent Fonts</span><svg style="left:396px;top:168.2px" width="5" height="7" viewBox="0 0 5 7"><path d="M1.2 1 L3.6 3.5 L1.2 6" stroke="#4a4a4a" stroke-width="1" fill="none"/></svg><span class="t" id="t57" style="left:221.3px;top:180.00px;font-size:9.6px;line-height:13px;color:#1a1a1a;transform:scaleX(0.7605);transform-origin:0 50%;-webkit-text-stroke:0.15px #1a1a1a;">Size</span><svg style="left:396px;top:183.5px" width="5" height="7" viewBox="0 0 5 7"><path d="M1.2 1 L3.6 3.5 L1.2 6" stroke="#4a4a4a" stroke-width="1" fill="none"/></svg><span class="t" id="t58" style="left:221.3px;top:200.00px;font-size:9.6px;line-height:13px;color:#1a1a1a;transform:scaleX(0.8431);transform-origin:0 50%;-webkit-text-stroke:0.15px #1a1a1a;">Create Outlines</span><span class="t" id="t59" style="left:347px;top:200.00px;font-size:9.6px;line-height:13px;color:#1a1a1a;transform:scaleX(0.8902);transform-origin:0 50%;-webkit-text-stroke:0.15px #1a1a1a;">Shift+Ctrl+O</span><span class="t" id="t60" style="left:221.3px;top:220.00px;font-size:9.6px;line-height:13px;color:#1a1a1a;transform:scaleX(0.8260);transform-origin:0 50%;-webkit-text-stroke:0.15px #1a1a1a;">Spelling</span><svg style="left:396px;top:223.5px" width="5" height="7" viewBox="0 0 5 7"><path d="M1.2 1 L3.6 3.5 L1.2 6" stroke="#4a4a4a" stroke-width="1" fill="none"/></svg><span class="t" id="t61" style="left:221.3px;top:240.00px;font-size:9.6px;line-height:13px;color:#1a1a1a;transform:scaleX(0.8278);transform-origin:0 50%;-webkit-text-stroke:0.15px #1a1a1a;">Insert Special Character</span><svg style="left:396px;top:243.5px" width="5" height="7" viewBox="0 0 5 7"><path d="M1.2 1 L3.6 3.5 L1.2 6" stroke="#4a4a4a" stroke-width="1" fill="none"/></svg><span class="t" id="t62" style="left:221.3px;top:255.00px;font-size:9.6px;line-height:13px;color:#1a1a1a;transform:scaleX(0.8296);transform-origin:0 50%;-webkit-text-stroke:0.15px #1a1a1a;">Insert WhiteSpace Character</span><svg style="left:396px;top:258.7px" width="5" height="7" viewBox="0 0 5 7"><path d="M1.2 1 L3.6 3.5 L1.2 6" stroke="#4a4a4a" stroke-width="1" fill="none"/></svg><span class="t" id="t63" style="left:221.3px;top:270.00px;font-size:9.6px;line-height:13px;color:#1a1a1a;transform:scaleX(0.8206);transform-origin:0 50%;-webkit-text-stroke:0.15px #1a1a1a;">Insert Break Character</span><svg style="left:396px;top:273.9px" width="5" height="7" viewBox="0 0 5 7"><path d="M1.2 1 L3.6 3.5 L1.2 6" stroke="#4a4a4a" stroke-width="1" fill="none"/></svg><span class="t" id="t64" style="left:221.3px;top:286.00px;font-size:9.6px;line-height:13px;color:#1a1a1a;transform:scaleX(0.8449);transform-origin:0 50%;-webkit-text-stroke:0.15px #1a1a1a;">Fill With PlaceHolder Text</span><span class="t" id="t65" style="left:221.3px;top:306.00px;font-size:9.6px;line-height:13px;color:#1a1a1a;transform:scaleX(0.8464);transform-origin:0 50%;-webkit-text-stroke:0.15px #1a1a1a;">Transform</span><svg style="left:396px;top:309.2px" width="5" height="7" viewBox="0 0 5 7"><path d="M1.2 1 L3.6 3.5 L1.2 6" stroke="#4a4a4a" stroke-width="1" fill="none"/></svg><span class="t" id="t66" style="left:221.3px;top:321.00px;font-size:9.6px;line-height:13px;color:#1a1a1a;transform:scaleX(0.8406);transform-origin:0 50%;-webkit-text-stroke:0.15px #1a1a1a;">Arrange</span><svg style="left:396px;top:324.4px" width="5" height="7" viewBox="0 0 5 7"><path d="M1.2 1 L3.6 3.5 L1.2 6" stroke="#4a4a4a" stroke-width="1" fill="none"/></svg><span class="t" id="t67" style="left:221.3px;top:336.00px;font-size:9.6px;line-height:13px;color:#1a1a1a;transform:scaleX(0.7948);transform-origin:0 50%;-webkit-text-stroke:0.15px #1a1a1a;">Select</span><svg style="left:396px;top:339.6px" width="5" height="7" viewBox="0 0 5 7"><path d="M1.2 1 L3.6 3.5 L1.2 6" stroke="#4a4a4a" stroke-width="1" fill="none"/></svg><span class="t" id="t68" style="left:221.3px;top:351.00px;font-size:9.6px;line-height:13px;color:#1a1a1a;transform:scaleX(0.8655);transform-origin:0 50%;-webkit-text-stroke:0.15px #1a1a1a;">Add to Library</span><span class="t" id="t69" style="left:221.3px;top:367.00px;font-size:9.6px;line-height:13px;color:#1a1a1a;transform:scaleX(0.8427);transform-origin:0 50%;-webkit-text-stroke:0.15px #1a1a1a;">Collect For Export</span><svg style="left:396px;top:370.0px" width="5" height="7" viewBox="0 0 5 7"><path d="M1.2 1 L3.6 3.5 L1.2 6" stroke="#4a4a4a" stroke-width="1" fill="none"/></svg><span class="t" id="t70" style="left:221.3px;top:382.00px;font-size:9.6px;line-height:13px;color:#1a1a1a;transform:scaleX(0.8310);transform-origin:0 50%;-webkit-text-stroke:0.15px #1a1a1a;">Export Selection...</span><div style="left:0px;top:500.5px;width:690px;height:1.5px;background:#0c0c0c;"></div><div style="left:0px;top:0px;width:690px;height:1px;background:#1e1e1e;"></div><div style="left:688.8px;top:0px;width:1.2px;height:502px;background:#0c0c0c;"></div></div></body></html>
